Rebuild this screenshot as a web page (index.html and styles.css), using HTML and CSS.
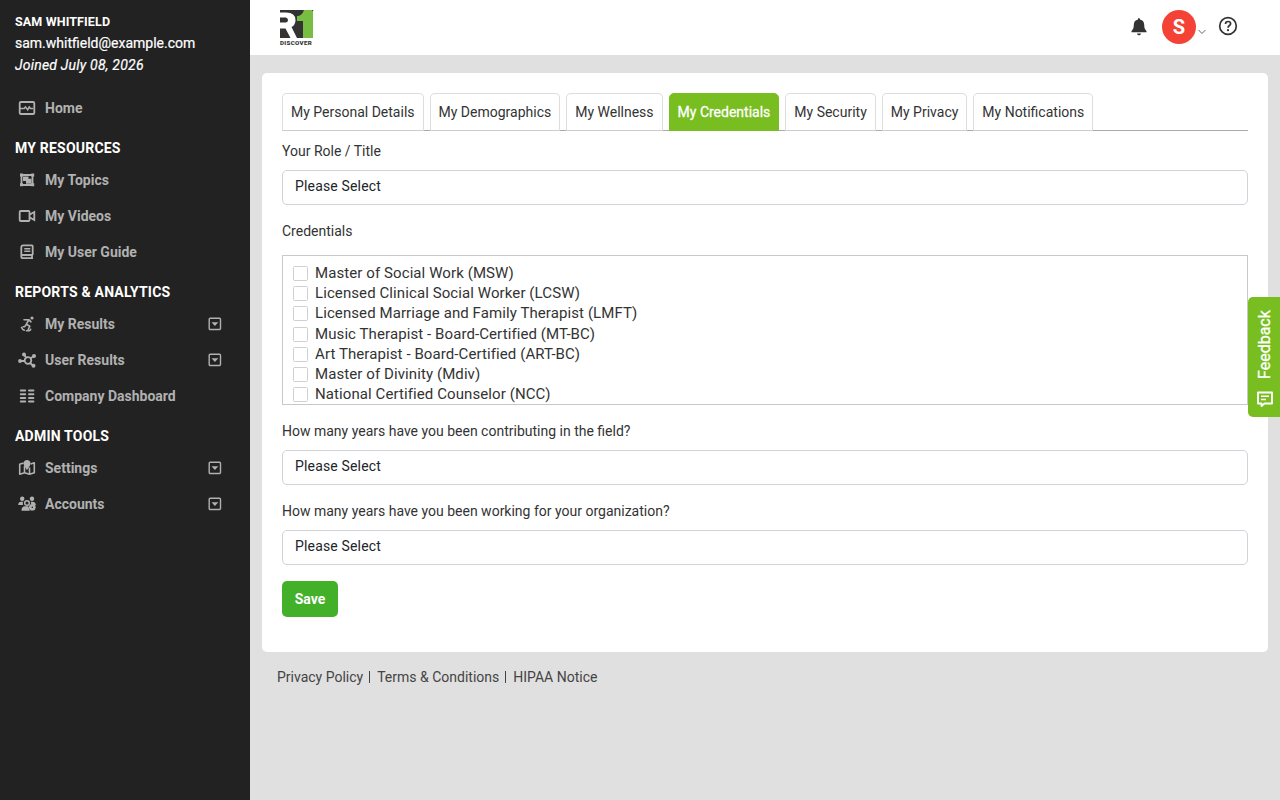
FILE: index.html
```html
<!DOCTYPE html>
<html lang="en">
<head>
<meta charset="utf-8">
<title>My Credentials</title>
<link rel="stylesheet" href="styles.css">
</head>
<body>
<div class="app">
  <aside class="sidebar">
    <div class="profile">
      <div class="name">SAM WHITFIELD</div>
      <div class="mail">sam.whitfield@example.com</div>
      <div class="joined">Joined July 08, 2026</div>
    </div>
    <nav class="menu">
      <a class="item"><svg class="ico" viewBox="0 0 18 18"><rect x="1.700" y="3" width="14.600" height="12" rx="1.300" fill="none" stroke="currentColor" stroke-width="1.800"/><path d="M2 9.400h4.200l1.300-1.500 2.200 3 1.500-3 1.200 1.500H15" fill="none" stroke="currentColor" stroke-width="1.500"/></svg><span>Home</span></a>
      <div class="head">MY RESOURCES</div>
      <a class="item"><svg class="ico" viewBox="0 0 18 18"><path d="M3.500 4h11v10h-11z" fill="none" stroke="currentColor" stroke-width="1.800"/><path d="M2 2.500h3v3H2zM13.200 2.500h3v3h-3zM2 12.300h3v3H2zM13.200 12.300h3v3h-3zM5 5.500h5.500v2.200h3v5H8V10H5z" fill="currentColor"/></svg><span>My Topics</span></a>
      <a class="item"><svg class="ico" viewBox="0 0 18 18"><g fill="none" stroke="currentColor" stroke-width="1.800"><rect x="1.700" y="4" width="9.800" height="10" rx="1"/><path d="M11.800 7.500 16.300 5v8l-4.500-2.500"/></g></svg><span>My Videos</span></a>
      <a class="item"><svg class="ico" viewBox="0 0 18 18"><g fill="none" stroke="currentColor" stroke-width="1.800"><path d="M15 12H5c-1 0-1.700.6-1.700 1.500S4 15.200 5 15.200h10M3.300 13.500V4.300c0-1.200.7-2 2-2H14q.7 0 .7.700v9M14 12v3"/><path d="M6.300 5.700h6M6.300 8.300h6" stroke-width="1.500"/></g></svg><span>My User Guide</span></a>
      <div class="head">REPORTS &amp; ANALYTICS</div>
      <a class="item"><svg class="ico" viewBox="0 0 18 18"><circle cx="14" cy="3" r="1.600" fill="currentColor"/><path d="M6 4.700h4.800l2.200 2.100M10.700 5 8.200 9.300l3.600 2-1.600 3.200M8.500 9.300 6.500 11.800H5M3.500 12.500q1 2.300 2.800 2.700M8.500 15.700h2.700q1.300-.2 1.500-1.500" fill="none" stroke="currentColor" stroke-width="1.600" stroke-linecap="round" stroke-linejoin="round"/></svg><span>My Results</span><svg class="drop" viewBox="0 0 14 14"><rect x="1.200" y="1.200" width="11.300" height="11.300" rx="1" fill="none" stroke="currentColor" stroke-width="1.400"/><path d="M3.500 5.300h6.800L6.900 8.900z" fill="currentColor"/></svg></a>
      <a class="item"><svg class="ico" viewBox="0 0 18 18"><g fill="none" stroke="currentColor" stroke-width="1.800"><circle cx="10" cy="9.500" r="3.300"/><path d="M2 10h4.700M6 3.500l2 3M12.600 7.300 16 5M12 12l3.500 3"/></g><g fill="currentColor"><circle cx="2" cy="10" r="1.900"/><circle cx="6" cy="3.500" r="2"/><circle cx="16" cy="5" r="2"/><circle cx="15.500" cy="14.700" r="2"/></g></svg><span>User Results</span><svg class="drop" viewBox="0 0 14 14"><rect x="1.200" y="1.200" width="11.300" height="11.300" rx="1" fill="none" stroke="currentColor" stroke-width="1.400"/><path d="M3.500 5.300h6.800L6.900 8.900z" fill="currentColor"/></svg></a>
      <a class="item"><svg class="ico" viewBox="0 0 18 18"><path d="M2.800 3.500h4.400M11 3.500h4.400M2.800 7.200h4.400M11 7.200h4.400M2.800 10.900h4.400M11 10.900h4.400M2.800 14.500h4.400M11 14.500h4.400" stroke="currentColor" stroke-width="2" stroke-linecap="round"/></svg><span>Company Dashboard</span></a>
      <div class="head">ADMIN TOOLS</div>
      <a class="item"><svg class="ico" viewBox="0 0 18 18"><path d="M5.500 4 1.700 5.300v10l4.800-1.500 5 1.500 4.800-1.500V3.700L12.700 5M6.500 7v6.800M11.500 8.500v6.600" fill="none" stroke="currentColor" stroke-width="1.600" stroke-linejoin="round"/><path d="M9 1c2 0 3.500 1.500 3.500 3.400C12.500 6.500 9 11 9 11S5.500 6.500 5.500 4.400C5.500 2.500 7 1 9 1z" fill="currentColor"/></svg><span>Settings</span><svg class="drop" viewBox="0 0 14 14"><rect x="1.200" y="1.200" width="11.300" height="11.300" rx="1" fill="none" stroke="currentColor" stroke-width="1.400"/><path d="M3.500 5.300h6.800L6.900 8.900z" fill="currentColor"/></svg></a>
      <a class="item"><svg class="ico" viewBox="0 0 18 18"><g fill="currentColor"><circle cx="4.200" cy="3.700" r="2.200"/><circle cx="14" cy="3.700" r="2.200"/><path d="M.2 10Q.5 6.700 3 6.700h2.300q-1 1.500-.2 3.300zM12.800 6.700H15q2.300 0 2.800 2.500v1l-4.600-1zM3.500 15.700q0-4.400 3.500-4.400h3.300l1.500 4.400z"/><circle cx="14.300" cy="12.300" r="3.300"/></g><circle cx="9" cy="8" r="2.300" fill="none" stroke="currentColor" stroke-width="1.500"/><circle cx="14.300" cy="12.300" r=".8" fill="#222"/></svg><span>Accounts</span><svg class="drop" viewBox="0 0 14 14"><rect x="1.200" y="1.200" width="11.300" height="11.300" rx="1" fill="none" stroke="currentColor" stroke-width="1.400"/><path d="M3.500 5.300h6.800L6.900 8.900z" fill="currentColor"/></svg></a>
    </nav>
  </aside>
  <div class="content">
    <header class="topbar">
      <div class="logo">
        <svg class="mark" viewBox="0 0 35 28"><path d="M0 0h33v28H0z" fill="#333"/><path d="M0 2.500h6q9.500 0 9.500 7.700 0 4.800-4 6.800L17 28h-6.500L5.500 18.500H0v-6h6q2-.3 2-2.300T6 7.500H0z" fill="#fff"/><path d="M24 0h8v28h-9V11h-6V6q5 0 7-6z" fill="#78be43"/><path d="M32 0h1.500v1H35M32 1h1v27h-1z" fill="#78be43"/></svg>
        <div class="word">DISCOVER</div>
      </div>
      <div class="tools">
        <svg class="bell" viewBox="0 0 16 18"><path d="M8 0q1 0 1 1.500c2.800.6 4.200 2.600 4.200 5.300 0 3.200.6 4.800 2.300 6.200v1.300H.5V13c1.700-1.400 2.300-3 2.300-6.200C2.800 4.100 4.200 2.100 7 1.500 7 .5 7.300 0 8 0zM6 15.400h4Q9.700 17.300 8 17.300T6 15.400z" fill="#333"/></svg>
        <div class="avatar">S</div>
        <svg class="caret" viewBox="0 0 8 6"><path d="m.5 1 3.500 3.500L7.500 1" fill="none" stroke="#555" stroke-width=".9"/></svg>
        <svg class="help" viewBox="0 0 20 20"><circle cx="10" cy="10" r="8.300" fill="none" stroke="#333" stroke-width="1.700"/><path d="M7.500 8c0-1.500 1-2.500 2.600-2.500s2.500 1 2.500 2.200C12.600 9.500 10 9.500 10 11.800" fill="none" stroke="#333" stroke-width="1.700"/><circle cx="10" cy="14.200" r="1.100" fill="#333"/></svg>
      </div>
    </header>
    <main class="main">
      <section class="card">
        <div class="tabs">
          <a class="tab">My Personal Details</a><a class="tab">My Demographics</a><a class="tab">My Wellness</a><a class="tab active">My Credentials</a><a class="tab">My Security</a><a class="tab">My Privacy</a><a class="tab">My Notifications</a>
        </div>
        <div class="label first">Your Role / Title</div>
        <div class="select">Please Select</div>
        <div class="label">Credentials</div>
        <div class="list">
          <div class="opt"><i class="box"></i>Master of Social Work (MSW)</div>
          <div class="opt"><i class="box"></i>Licensed Clinical Social Worker (LCSW)</div>
          <div class="opt"><i class="box"></i>Licensed Marriage and Family Therapist (LMFT)</div>
          <div class="opt"><i class="box"></i>Music Therapist - Board-Certified (MT-BC)</div>
          <div class="opt"><i class="box"></i>Art Therapist - Board-Certified (ART-BC)</div>
          <div class="opt"><i class="box"></i>Master of Divinity (Mdiv)</div>
          <div class="opt"><i class="box"></i>National Certified Counselor (NCC)</div>
        </div>
        <div class="label">How many years have you been contributing in the field?</div>
        <div class="select">Please Select</div>
        <div class="label">How many years have you been working for your organization?</div>
        <div class="select">Please Select</div>
        <button class="save">Save</button>
      </section>
      <footer class="foot"><a>Privacy Policy</a><a>Terms &amp; Conditions</a><a>HIPAA Notice</a></footer>
    </main>
  </div>
</div>
<div class="feedback">
  <span>Feedback</span>
  <svg viewBox="0 0 18 18"><path d="M2 2.500h14v11H8.500L5.500 16v-2.500H2z" fill="none" stroke="#fff" stroke-width="1.900" stroke-linejoin="round"/><path d="M5 6.300h8M5 9.600h5" stroke="#fff" stroke-width="1.500"/></svg>
</div>
</body>
</html>
```
FILE: styles.css
```css
* { box-sizing: border-box; }
body { margin: 0; font-family: Roboto, sans-serif; font-size: 14px; line-height: 20px; color: #333; }
.app { display: flex; height: 800px; overflow: hidden; background: #e0e0e0; }
.sidebar { width: 250px; flex: none; background: #222; padding-top: 10px; }
.profile { padding-left: 15px; color: #fff; line-height: 22px; }
.name { font-size: 12.5px; font-weight: 700; letter-spacing: .12px; line-height: 23px; margin-bottom: -1px; }
.mail, .joined { -webkit-text-stroke: .2px #fff; }
.joined { font-style: italic; letter-spacing: .22px; }
.menu { padding-top: 14px; }
.item { display: flex; align-items: center; height: 36px; padding: 0 28px 0 18px; color: #b1b1b1; font-weight: 700; }
.ico { width: 18px; height: 18px; margin-right: 9px; }
.drop { width: 14px; height: 14px; margin-left: auto; }
.head { height: 36px; padding: 8px 15px 0; line-height: 28px; color: #fff; font-weight: 700; letter-spacing: .21px; }
.content { flex: 1; min-width: 0; }
.topbar { height: 55px; background: #fff; display: flex; justify-content: space-between; padding: 10px 42px 0 30px; }
.logo { width: 35px; }
.mark { display: block; width: 35px; height: 28px; }
.word { font: 900 6.2px/8px Roboto, sans-serif; letter-spacing: .32px; margin-top: 1px; }
.tools { display: flex; height: 34px; align-items: center; }
.bell { width: 16px; height: 18px; margin: -1px 15px 0 0; }
.avatar { width: 34px; height: 34px; border-radius: 50%; background: #f44336; color: #fff; font: 700 20px/34px Roboto, sans-serif; text-align: center; }
.caret { width: 8px; height: 6px; margin: 9px 12px 0 2px; }
.help { width: 20px; height: 20px; margin-top: -2px; }
.main { padding: 18px 12px 0; }
.card { height: 579px; padding: 20px; background: #fff; border-radius: 5px; }
.tabs { display: flex; gap: 6px; height: 38px; border-bottom: 1px solid #aaa; }
.tab { height: 38px; padding: 0 8px; border: 1px solid #ddd; border-bottom-color: #ccc; border-radius: 5px 5px 0 0; line-height: 37px; white-space: nowrap; background: #fff; }
.tab.active { background: #78be20; border-color: #78be20; color: #fff; -webkit-text-stroke: .3px #fff; }
.label { margin-top: 16px; height: 29px; line-height: 20px; }
.label.first { margin-top: 10px; }
.select { height: 35px; border: 1px solid #ced4da; border-radius: 5px; padding: 0 12px; line-height: 31px; color: #212529; letter-spacing: .16px; }
.list { height: 150px; margin-top: 5px; border: 1px solid #c8c8c8; padding: 7px 10px 0; overflow: hidden; }
.opt { height: 20.2px; line-height: 20px; font-size: 15px; letter-spacing: .09px; display: flex; align-items: center; }
.box { width: 15px; height: 15px; border: 1px solid #d0d0d4; border-radius: 1.5px; margin: 1px 7px 0 0; }
.save { display: block; width: 56px; height: 36px; margin-top: 16px; padding: 0; border: 0; border-radius: 5px; background: #43b02a; color: #fff; font: 700 14px Roboto, sans-serif; }
.foot { display: flex; align-items: center; padding: 15px 15px 0; color: #444; }
.foot a + a { margin-left: 6px; padding-left: 8px; position: relative; }
.foot a + a::before { content: ""; position: absolute; left: 0; top: 4px; width: 1px; height: 12px; background: #444; }
.feedback { position: absolute; left: 1248px; top: 297px; width: 32px; height: 120px; background: #78be20; border-radius: 5px 0 0 5px; color: #fff; display: flex; flex-direction: column; align-items: center; }
.feedback span { writing-mode: vertical-rl; transform: rotate(180deg); font-size: 16px; -webkit-text-stroke: .3px #fff; line-height: 20px; margin: 12px 0 0 1px; height: 70px; }
.feedback svg { width: 18px; height: 18px; margin: 11px 0 0 2px; }
```
